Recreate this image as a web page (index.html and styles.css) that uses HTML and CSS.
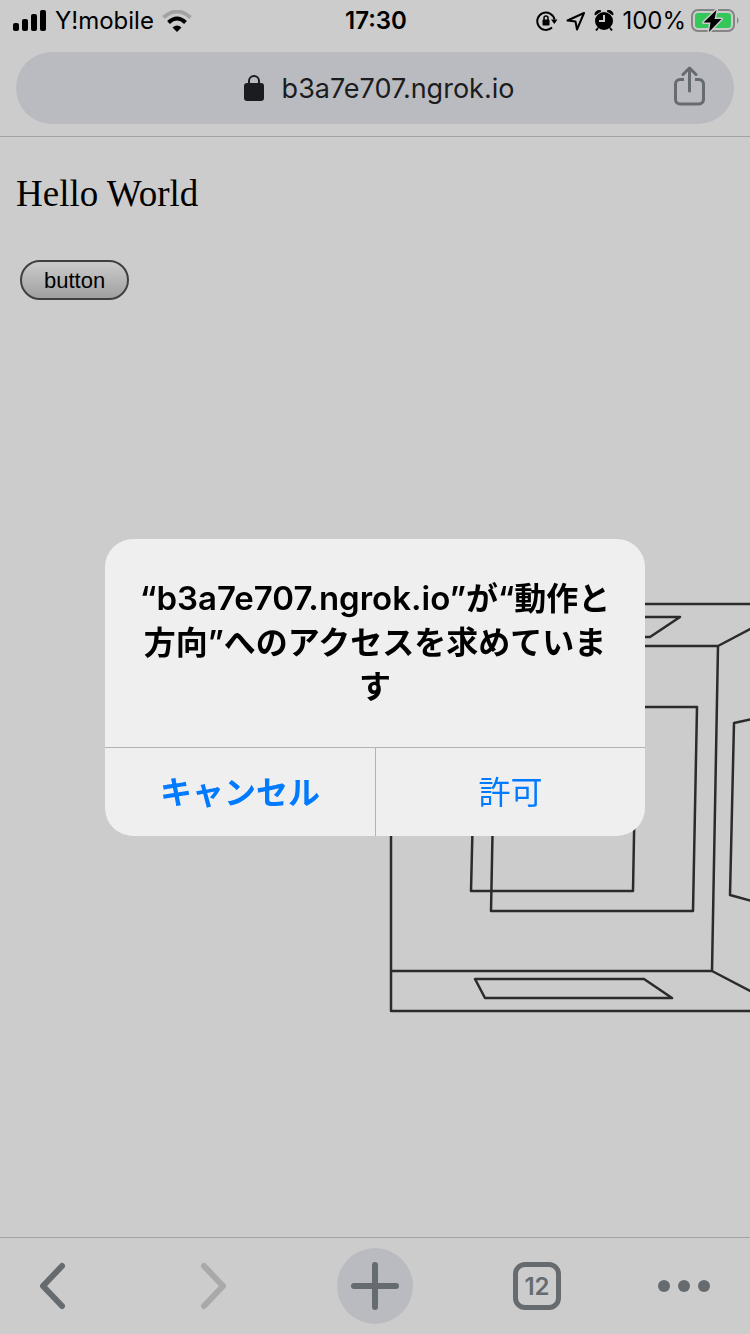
FILE: index.html
```html
<!DOCTYPE html>
<html lang="ja">
<head>
<meta charset="utf-8">
<meta name="viewport" content="width=device-width, initial-scale=1">
<title>b3a7e707.ngrok.io</title>
<link rel="stylesheet" href="styles.css">
</head>
<body>
<div class="screen">
  <header class="top">
    <div class="status">
      <div class="status-side">
        <svg class="signal" width="34" height="22" viewBox="0 0 34 22" aria-hidden="true">
          <rect x="0" y="13" width="6" height="8" rx="2"/>
          <rect x="9" y="9" width="6" height="12" rx="2"/>
          <rect x="18" y="4" width="6" height="17" rx="2"/>
          <rect x="27" y="0" width="6" height="21" rx="2"/>
        </svg>
        <span>Y!mobile</span>
        <svg class="wifi" width="30" height="22" viewBox="0 0 30 22" aria-hidden="true">
          <path d="M1.500 7.500Q15-4.500 28.500 7.500" fill="none" stroke="#a3a3a3" stroke-width="4"/>
          <path d="M6.500 12.500Q15 4.500 23.500 12.500" fill="none" stroke="#000" stroke-width="4"/>
          <path d="M10.500 17.500Q15 13.500 19.500 17.500L15 22Z"/>
        </svg>
      </div>
      <time class="clock">17:30</time>
      <div class="status-side status-right">
        <svg width="22" height="22" viewBox="0 0 22 22" aria-hidden="true">
          <path d="M16 17.500A8.700 8.700 0 1 1 18.500 9.500" fill="none" stroke="#000" stroke-width="2"/>
          <path d="M15 9.500h6.500l-3.200 4.500z"/>
          <rect x="6.500" y="9.500" width="7" height="6" rx="1"/>
          <path d="M8 10V8a2 2 0 0 1 4 0v2" fill="none" stroke="#000" stroke-width="1.500"/>
        </svg>
        <svg width="20" height="20" viewBox="0 0 20 20" aria-hidden="true">
          <path d="M18 2L1.500 9.500L9.500 10.500L11 18.500Z" fill="none" stroke="#000" stroke-width="2" stroke-linejoin="round"/>
        </svg>
        <svg width="20" height="22" viewBox="0 0 20 22" aria-hidden="true">
          <circle cx="10" cy="11" r="9"/>
          <path d="M1 5A4 4 0 0 1 7 1zM19 5A4 4 0 0 0 13 1z" stroke="#000" stroke-linejoin="round"/>
          <path d="M4 18l-2 2.500M16 18l2 2.500" stroke="#000" stroke-width="2"/>
          <path d="M10 5v6H5" fill="none" stroke="#ccc" stroke-width="2"/>
        </svg>
        <div class="battery">
          <span>100%</span>
          <svg width="48" height="24" viewBox="0 0 48 24" aria-hidden="true">
            <rect x="1" y="1" width="42" height="21" rx="6" fill="none" stroke="#858585" stroke-width="2"/>
            <rect x="4" y="4" width="36" height="15" rx="3" fill="#34c759"/>
            <path d="M46 8q3 3.500 0 7z" fill="#858585"/>
            <path d="M25.500 1L12.500 13.500H19.500L18 23L30.500 10H23.500Z" fill="#000" stroke="#ccc" stroke-width="3" stroke-linejoin="round" paint-order="stroke"/>
          </svg>
        </div>
      </div>
    </div>
    <div class="address">
      <button class="url" type="button">
        <svg width="20" height="26" viewBox="0 0 20 26" aria-hidden="true">
          <rect x="0" y="8" width="20" height="18" rx="3" fill="#1b1c20"/>
          <path d="M5 9V6a5 5 0 0 1 10 0v3" fill="none" stroke="#1b1c20" stroke-width="2"/>
        </svg>
        <span>b3a7e707.ngrok.io</span>
      </button>
      <button class="share" type="button" aria-label="共有">
        <svg width="32" height="40" viewBox="0 0 32 40" aria-hidden="true">
          <path d="M10 13.500H6a4.500 4.500 0 0 0-4.500 4.500V33.500a4.500 4.500 0 0 0 4.500 4.500H25a4.500 4.500 0 0 0 4.500-4.500V18a4.500 4.500 0 0 0-4.500-4.500H21" fill="none" stroke="#666b6f" stroke-width="3"/>
          <path d="M15.500 25V3M9 8.500L15.500 2L22 8.500" fill="none" stroke="#666b6f" stroke-width="3" stroke-linecap="round" stroke-linejoin="round"/>
        </svg>
      </button>
    </div>
  </header>

  <main class="page">
    <p class="hello">Hello World</p>
    <button class="page-button" type="button">button</button>
    <svg class="room" viewBox="0 0 360 412" fill="none" stroke="#2b2b2b" stroke-width="2.500" stroke-linejoin="round" aria-hidden="true">
      <path d="M362 2H1V409H362"/>
      <path d="M1 44H328L362 26M328 44L322 369L362 390M1 369H322"/>
      <path d="M90 15H290L260 35H110Z"/>
      <path d="M105 105H307L303 309H101Z"/>
      <path d="M85 125H246L243 289H81Z"/>
      <path d="M362 117L344 121L340 293L362 299"/>
      <path d="M85 377H254L282 396H95Z"/>
    </svg>
  </main>

  <nav class="toolbar" aria-label="ツールバー">
    <button class="tool tool-first" type="button" aria-label="戻る">
      <svg width="28" height="48" viewBox="0 0 28 48" aria-hidden="true"><path d="M23 4L4 24L23 44" fill="none" stroke="#666b6f" stroke-width="6" stroke-linecap="round" stroke-linejoin="round"/></svg>
    </button>
    <button class="tool" type="button" aria-label="進む" disabled>
      <svg width="28" height="48" viewBox="0 0 28 48" aria-hidden="true"><path d="M5 4L24 24L5 44" fill="none" stroke="#a9a9a9" stroke-width="6" stroke-linecap="round" stroke-linejoin="round"/></svg>
    </button>
    <button class="tool" type="button" aria-label="新しいタブ">
      <svg width="76" height="76" viewBox="0 0 76 76" aria-hidden="true"><circle cx="38" cy="38" r="38" fill="#b9bbc0"/><path d="M38 17V59M17 38H59" stroke="#666b6f" stroke-width="6" stroke-linecap="round"/></svg>
    </button>
    <button class="tool" type="button" aria-label="タブ 12"><span class="tabs">12</span></button>
    <button class="tool tool-last" type="button" aria-label="メニュー">
      <svg width="52" height="12" viewBox="0 0 52 12" fill="#666b6f" aria-hidden="true"><circle cx="6" cy="6" r="6"/><circle cx="26" cy="6" r="6"/><circle cx="46" cy="6" r="6"/></svg>
    </button>
  </nav>
</div>

<div class="overlay">
  <div class="alert" role="alertdialog" aria-modal="true" aria-labelledby="alert-title">
    <h1 class="alert-title" id="alert-title"><span class="host">“b3a7e707.ngrok.io”</span>が“動作と方向”へのアクセスを求めています</h1>
    <div class="actions">
      <button class="action action-cancel" type="button">キャンセル</button>
      <button class="action" type="button">許可</button>
    </div>
  </div>
</div>
</body>
</html>
```

FILE: styles.css
```css
* { box-sizing: border-box; }

body {
  margin: 0;
  background: #ccc;
  color: #000;
  font-family: Inter, "Noto Sans CJK JP", sans-serif;
}

button {
  margin: 0;
  padding: 0;
  border: 0;
  background: none;
  color: inherit;
  font: inherit;
}

svg { display: block; flex-shrink: 0; }

.screen {
  display: flex;
  flex-direction: column;
  min-height: 100vh;
  overflow: hidden;
}

.top { border-bottom: 1px solid #a3a3a3; }

.status {
  display: grid;
  grid-template-columns: 1fr auto 1fr;
  align-items: center;
  height: 40px;
  padding: 0 11px 0 13px;
  font-size: 24px;
  line-height: 42px;
}

.status-side { display: flex; align-items: center; gap: 8px; }
.status-right { justify-content: flex-end; }
.battery { display: flex; align-items: center; gap: 5px; }
.clock { font-weight: 600; }

.address {
  display: flex;
  align-items: center;
  height: 72px;
  margin: 12px 16px;
  padding: 0 28px;
  border-radius: 36px;
  background: #b9bbc0;
}

.url {
  display: flex;
  flex: 1;
  align-items: center;
  justify-content: center;
  gap: 18px;
  padding-left: 40px;
  color: #1b1c20;
  font-size: 27px;
}

.share { padding-bottom: 4px; }

.page {
  flex: 1;
  padding: 37px 0 0;
}

.hello {
  margin: 0 16px;
  font: 37px/40px "Liberation Serif", serif;
}

.page-button {
  display: block;
  height: 40px;
  margin: 46px 20px 0;
  padding: 2px 22px 0;
  border: 2px solid #404040;
  border-radius: 20px;
  background: linear-gradient(#cbcbcb, #a0a0a0);
  font: 22px "Liberation Sans", sans-serif;
}

.room {
  width: 48%;
  margin: 302px 0 0 auto;
  overflow: visible;
}

.toolbar {
  display: grid;
  grid-template-columns: 22fr 27fr 27fr 27fr 22fr;
  height: 97px;
  border-top: 1px solid #a3a3a3;
}

.tool {
  display: flex;
  align-items: center;
  justify-content: center;
}
.tool-first { justify-content: flex-start; padding-left: 39px; }
.tool-last { justify-content: flex-end; padding-right: 40px; }

.tabs {
  width: 48px;
  height: 48px;
  border: 5px solid #666b6f;
  border-radius: 12px;
  color: #666b6f;
  font-size: 24px;
  font-weight: 600;
  line-height: 40px;
}

.overlay {
  position: fixed;
  inset: 0;
  display: grid;
  place-items: center;
  padding-top: 40px;
}

.alert {
  width: 72%;
  overflow: hidden;
  border-radius: 28px;
  background: #efefef;
  text-align: center;
}

.alert-title {
  margin: 0;
  padding: 38px 32px;
  font-size: 32px;
  font-weight: 600;
  line-height: 44px;
}

.host { font-size: 33px; line-height: 1; }

.actions {
  display: grid;
  grid-template-columns: 1fr 1fr;
  height: 89px;
  border-top: 1px solid #b2b2b2;
}

.action { padding-bottom: 3px; color: #007aff; font-size: 32px; }
.action-cancel { font-weight: 600; }
.action + .action { border-left: 1px solid #b2b2b2; }
```
